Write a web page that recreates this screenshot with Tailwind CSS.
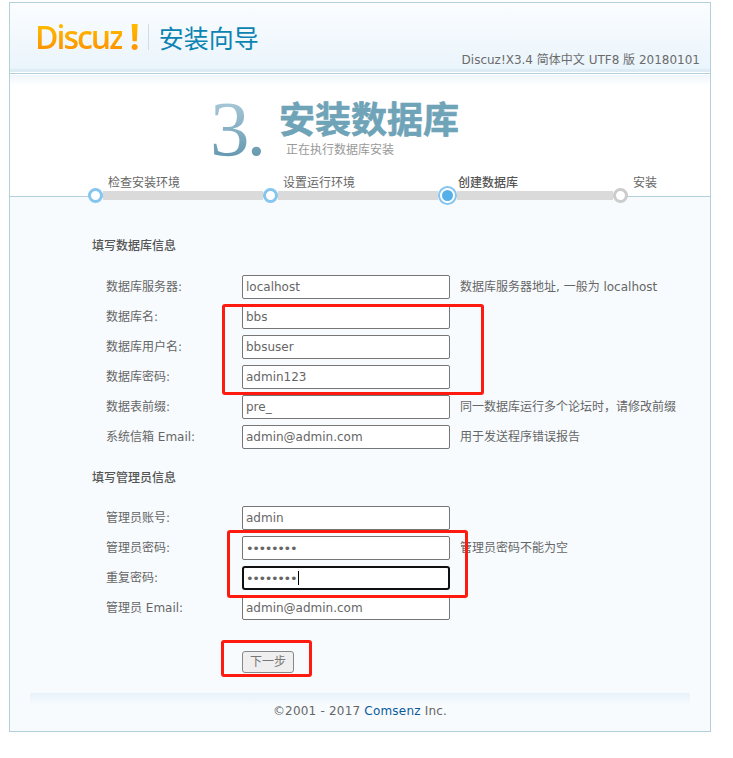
<!DOCTYPE html>
<html lang="zh-CN">
<head>
    <meta charset="UTF-8">
    <title>Discuz! 安装向导</title>
    <script src="https://cdn.jsdelivr.net/npm/@tailwindcss/browser@4"></script>
</head>
<body class="bg-white text-[12px] leading-[16px] text-[#666] [font-family:'DejaVu_Sans','Noto_Sans_CJK_SC',sans-serif]">
    <div class="relative w-[733px] h-[758px] overflow-hidden pt-[2px] pl-[9px]">
        <div class="w-[702px] h-[730px] border border-[#b4d0dc] bg-[#f7fbfe] flex flex-col">
            <!-- header -->
            <div class="h-[69px] shrink-0 bg-gradient-to-b from-[#fbfdff] to-[#e9f4fb] flex items-start relative">
                <div class="ml-[25px] mt-[16px] flex items-center h-[36px]">
                    <span class="text-[32px] leading-[36px] font-semibold tracking-[-2px] bg-gradient-to-b from-[#ffc400] to-[#ff8a00] bg-clip-text text-transparent [font-family:'Open_Sans',sans-serif]">Discuz</span>
                    <span class="ml-[7px] text-[36px] leading-[36px] font-bold bg-gradient-to-b from-[#ffc400] to-[#ff8a00] bg-clip-text text-transparent [font-family:'Open_Sans',sans-serif]">!</span>
                    <span class="ml-[8px] w-px h-[26px] bg-[#cfdfe8]"></span>
                    <span class="ml-[10px] text-[25px] leading-[36px] text-[#0b84b2] [font-family:'Noto_Sans_CJK_SC',sans-serif]">安装向导</span>
                </div>
                <div class="ml-auto mr-[10px] mt-[49px] text-[#6b6b6b]">Discuz!X3.4 简体中文 UTF8 版 20180101</div>
                <div class="absolute left-0 right-0 bottom-0 h-[3px] bg-[#dcebf4]"></div>
            </div>
            <div class="h-px shrink-0 bg-white"></div>
            <div class="h-px shrink-0 bg-[#b4d0dc]"></div>

            <!-- title and steps -->
            <div class="h-[123px] shrink-0 bg-white border-b border-[#b4d0dc] flex flex-col relative">
                <div class="h-[11px] mt-px bg-gradient-to-b from-[#eff6fb] to-white"></div>
                <div class="flex h-[89px] pl-[200px]">
                    <div class="text-[79px] leading-[78px] mt-[4px] w-[69px] tracking-[-3px] bg-gradient-to-b from-[#b5d2e0] to-[#4f8aa3] bg-clip-text text-transparent [font-family:'Liberation_Serif',serif]">3.</div>
                    <div class="flex flex-col">
                        <div class="text-[36px] leading-[44px] mt-[9px] font-bold text-[#6fa3b7] [-webkit-text-stroke:0.6px_#6fa3b7] [font-family:'Noto_Sans_CJK_SC',sans-serif]">安装数据库</div>
                        <div class="ml-[7px] mt-[3px] text-[#999]">正在执行数据库安装</div>
                    </div>
                </div>
                <div class="flex pl-[98px] h-[16px] shrink-0">
                    <div class="w-[175px]">检查安装环境</div>
                    <div class="w-[175px]">设置运行环境</div>
                    <div class="w-[175px] text-[#555] font-medium">创建数据库</div>
                    <div>安装</div>
                </div>
                <div class="flex items-center h-[19px] shrink-0 ml-[78px] -mt-[5px] relative z-10 -mb-[9px]">
                    <span class="w-[15px] h-[15px] shrink-0 rounded-full border-[3px] border-[#85c5ef] bg-white relative z-10"></span>
                    <span class="w-[160px] h-[9px] bg-[#dadada]"></span>
                    <span class="w-[15px] h-[15px] shrink-0 rounded-full border-[3px] border-[#85c5ef] bg-white relative z-10"></span>
                    <span class="w-[160px] h-[9px] bg-[#dadada]"></span>
                    <span class="w-[19px] h-[19px] shrink-0 rounded-full border-2 border-[#85c5ef] bg-white p-[2px] relative z-10"><span class="block w-full h-full rounded-full bg-[#55b0ea]"></span></span>
                    <span class="w-[156px] h-[9px] bg-[#dadada]"></span>
                    <span class="w-[15px] h-[15px] shrink-0 rounded-full border-[3px] border-[#cccccc] bg-white relative z-10"></span>
                </div>
            </div>

            <!-- form -->
            <div class="pl-[82px] pt-[41px] text-[#555] font-medium h-[57px] shrink-0">填写数据库信息</div>
            <div class="ml-[96px] mt-[21px] flex flex-col gap-[6px]">
                <div class="flex items-center h-[24px]">
                    <label class="w-[136px]">数据库服务器:</label>
                    <input type="text" value="localhost" class="w-[208px] h-[24px] px-[3px] bg-white border border-[#767676] rounded-[2px] text-[12px] text-[#666]">
                    <span class="ml-[10px]">数据库服务器地址, 一般为 localhost</span>
                </div>
                <div class="flex items-center h-[24px]">
                    <label class="w-[136px]">数据库名:</label>
                    <input type="text" value="bbs" class="w-[208px] h-[24px] px-[3px] bg-white border border-[#767676] rounded-[2px] text-[12px] text-[#666]">
                </div>
                <div class="flex items-center h-[24px]">
                    <label class="w-[136px]">数据库用户名:</label>
                    <input type="text" value="bbsuser" class="w-[208px] h-[24px] px-[3px] bg-white border border-[#767676] rounded-[2px] text-[12px] text-[#666]">
                </div>
                <div class="flex items-center h-[24px]">
                    <label class="w-[136px]">数据库密码:</label>
                    <input type="text" value="admin123" class="w-[208px] h-[24px] px-[3px] bg-white border border-[#767676] rounded-[2px] text-[12px] text-[#666]">
                </div>
                <div class="flex items-center h-[24px]">
                    <label class="w-[136px]">数据表前缀:</label>
                    <input type="text" value="pre_" class="w-[208px] h-[24px] px-[3px] bg-white border border-[#767676] rounded-[2px] text-[12px] text-[#666]">
                    <span class="ml-[10px]">同一数据库运行多个论坛时，请修改前缀</span>
                </div>
                <div class="flex items-center h-[24px]">
                    <label class="w-[136px]">系统信箱 Email:</label>
                    <input type="text" value="admin@admin.com" class="w-[208px] h-[24px] px-[3px] bg-white border border-[#767676] rounded-[2px] text-[12px] text-[#666]">
                    <span class="ml-[10px]">用于发送程序错误报告</span>
                </div>
            </div>

            <div class="pl-[82px] mt-[21px] text-[#555] font-medium shrink-0">填写管理员信息</div>
            <div class="ml-[96px] mt-[20px] flex flex-col gap-[6px]">
                <div class="flex items-center h-[24px]">
                    <label class="w-[136px]">管理员账号:</label>
                    <input type="text" value="admin" class="w-[208px] h-[24px] px-[3px] bg-white border border-[#767676] rounded-[2px] text-[12px] text-[#666]">
                </div>
                <div class="flex items-center h-[24px]">
                    <label class="w-[136px]">管理员密码:</label>
                    <input type="password" value="admin123" class="w-[208px] h-[24px] px-[3px] bg-white border border-[#767676] rounded-[2px] text-[13px] text-[#666] tracking-[-1.4px]">
                    <span class="ml-[10px]">管理员密码不能为空</span>
                </div>
                <div class="flex items-center h-[24px]">
                    <label class="w-[136px]">重复密码:</label>
                    <div class="relative w-[208px] h-[24px]">
                        <input type="password" value="admin123" class="w-full h-full px-[2px] bg-white border-2 border-[#101010] rounded-[3px] text-[13px] text-[#666] tracking-[-1.4px]">
                        <span class="absolute left-[56px] top-[5px] w-px h-[14px] bg-black"></span>
                    </div>
                </div>
                <div class="flex items-center h-[24px]">
                    <label class="w-[136px]">管理员 Email:</label>
                    <input type="text" value="admin@admin.com" class="w-[208px] h-[24px] px-[3px] bg-white border border-[#767676] rounded-[2px] text-[12px] text-[#666]">
                </div>
            </div>

            <div class="ml-[232px] mt-[31px]">
                <button type="button" class="w-[52px] h-[22px] bg-[#efefef] border border-[#888] rounded-[3px] text-[12px] text-[#777]">下一步</button>
            </div>

            <div class="ml-[20px] mt-[20px] w-[660px] h-[12px] shrink-0 bg-gradient-to-b from-[#e8f2f9] to-[#f7fbfe]"></div>
            <div class="text-center -mt-[2px] tracking-[0.2px] text-[#666]">©2001 - 2017 <span class="text-[#0a5a9c]">Comsenz</span> Inc.</div>
        </div>

        <!-- red annotation boxes drawn over the screenshot -->
        <div class="absolute left-[222px] top-[304px] w-[262px] h-[91px] border-[3px] border-[#ff1a10] rounded-[3px]"></div>
        <div class="absolute left-[227px] top-[530px] w-[241px] h-[68px] border-[3px] border-[#ff1a10] rounded-[3px]"></div>
        <div class="absolute left-[221px] top-[640px] w-[91px] h-[37px] border-[3px] border-[#ff1a10] rounded-[3px]"></div>
    </div>
</body>
</html>
